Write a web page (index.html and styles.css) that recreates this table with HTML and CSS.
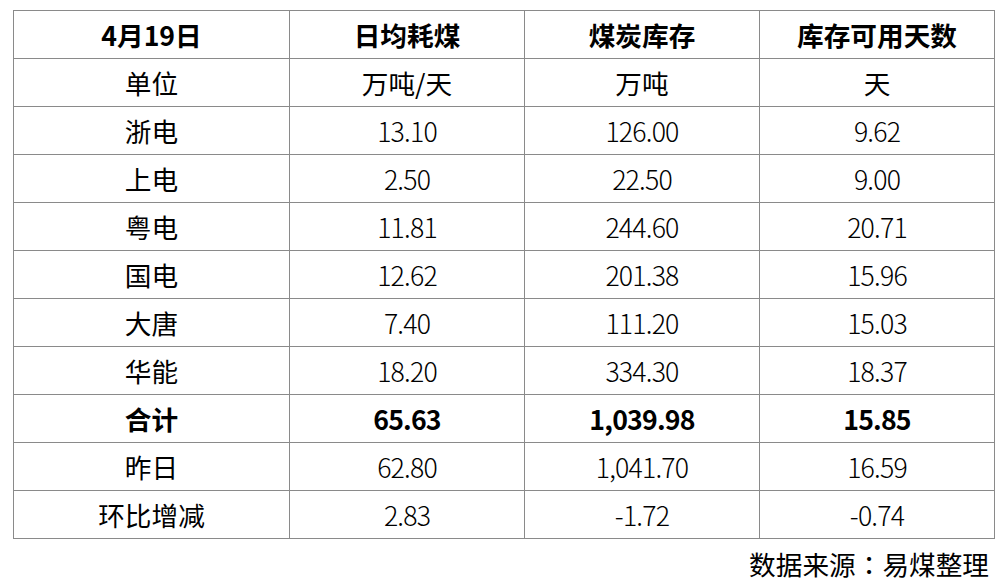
FILE: index.html
```html
<!DOCTYPE html>
<html lang="zh">
<head>
<meta charset="utf-8">
<link rel="stylesheet" href="styles.css">
</head>
<body>
<div class="page">
<table class="data">
<colgroup><col class="c1"><col class="c2"><col class="c2"><col class="c2"></colgroup>
<tr class="bold"><td>4月19日</td><td>日均耗煤</td><td>煤炭库存</td><td>库存可用天数</td></tr>
<tr><td>单位</td><td>万吨/天</td><td>万吨</td><td>天</td></tr>
<tr><td>浙电</td><td class="num">13.10</td><td class="num">126.00</td><td class="num">9.62</td></tr>
<tr><td>上电</td><td class="num">2.50</td><td class="num">22.50</td><td class="num">9.00</td></tr>
<tr><td>粤电</td><td class="num">11.81</td><td class="num">244.60</td><td class="num">20.71</td></tr>
<tr><td>国电</td><td class="num">12.62</td><td class="num">201.38</td><td class="num">15.96</td></tr>
<tr><td>大唐</td><td class="num">7.40</td><td class="num">111.20</td><td class="num">15.03</td></tr>
<tr><td>华能</td><td class="num">18.20</td><td class="num">334.30</td><td class="num">18.37</td></tr>
<tr class="bold"><td>合计</td><td class="num">65.63</td><td class="num">1,039.98</td><td class="num">15.85</td></tr>
<tr><td>昨日</td><td class="num">62.80</td><td class="num">1,041.70</td><td class="num">16.59</td></tr>
<tr><td>环比增减</td><td class="num">2.83</td><td class="num">-1.72</td><td class="num">-0.74</td></tr>
</table>
<div class="source">数据来源<span class="colon" lang="ja">：</span>易煤整理</div>
</div>
</body>
</html>
```
FILE: styles.css
```css
html, body {
  margin: 0;
  padding: 0;
  background: #ffffff;
}
.page {
  padding: 10px 0 0 13px;
  width: 981px;
  font-family: "Noto Sans CJK SC", "Noto Sans", sans-serif;
  color: #000;
}
.data {
  border-collapse: collapse;
  width: 981px;
  table-layout: fixed;
}
.c1 { width: 276px; }
.c2 { width: 235px; }
.data td {
  border: 1px solid #8a8a8a;
  height: 47px;
  padding: 0;
  text-align: center;
  vertical-align: middle;
  font-size: 26.67px;
  line-height: 30px;
  font-weight: 400;
}
.data td.num {
  font-weight: 300;
  letter-spacing: -0.8px;
}
.data tr.bold td {
  font-weight: 700;
}
.source {
  text-align: right;
  padding-right: 5px;
  margin-top: 5px;
  font-size: 26.67px;
  line-height: 40px;
}
.colon {
  font-family: "Noto Sans CJK JP", "Noto Sans CJK SC", sans-serif;
}
```
